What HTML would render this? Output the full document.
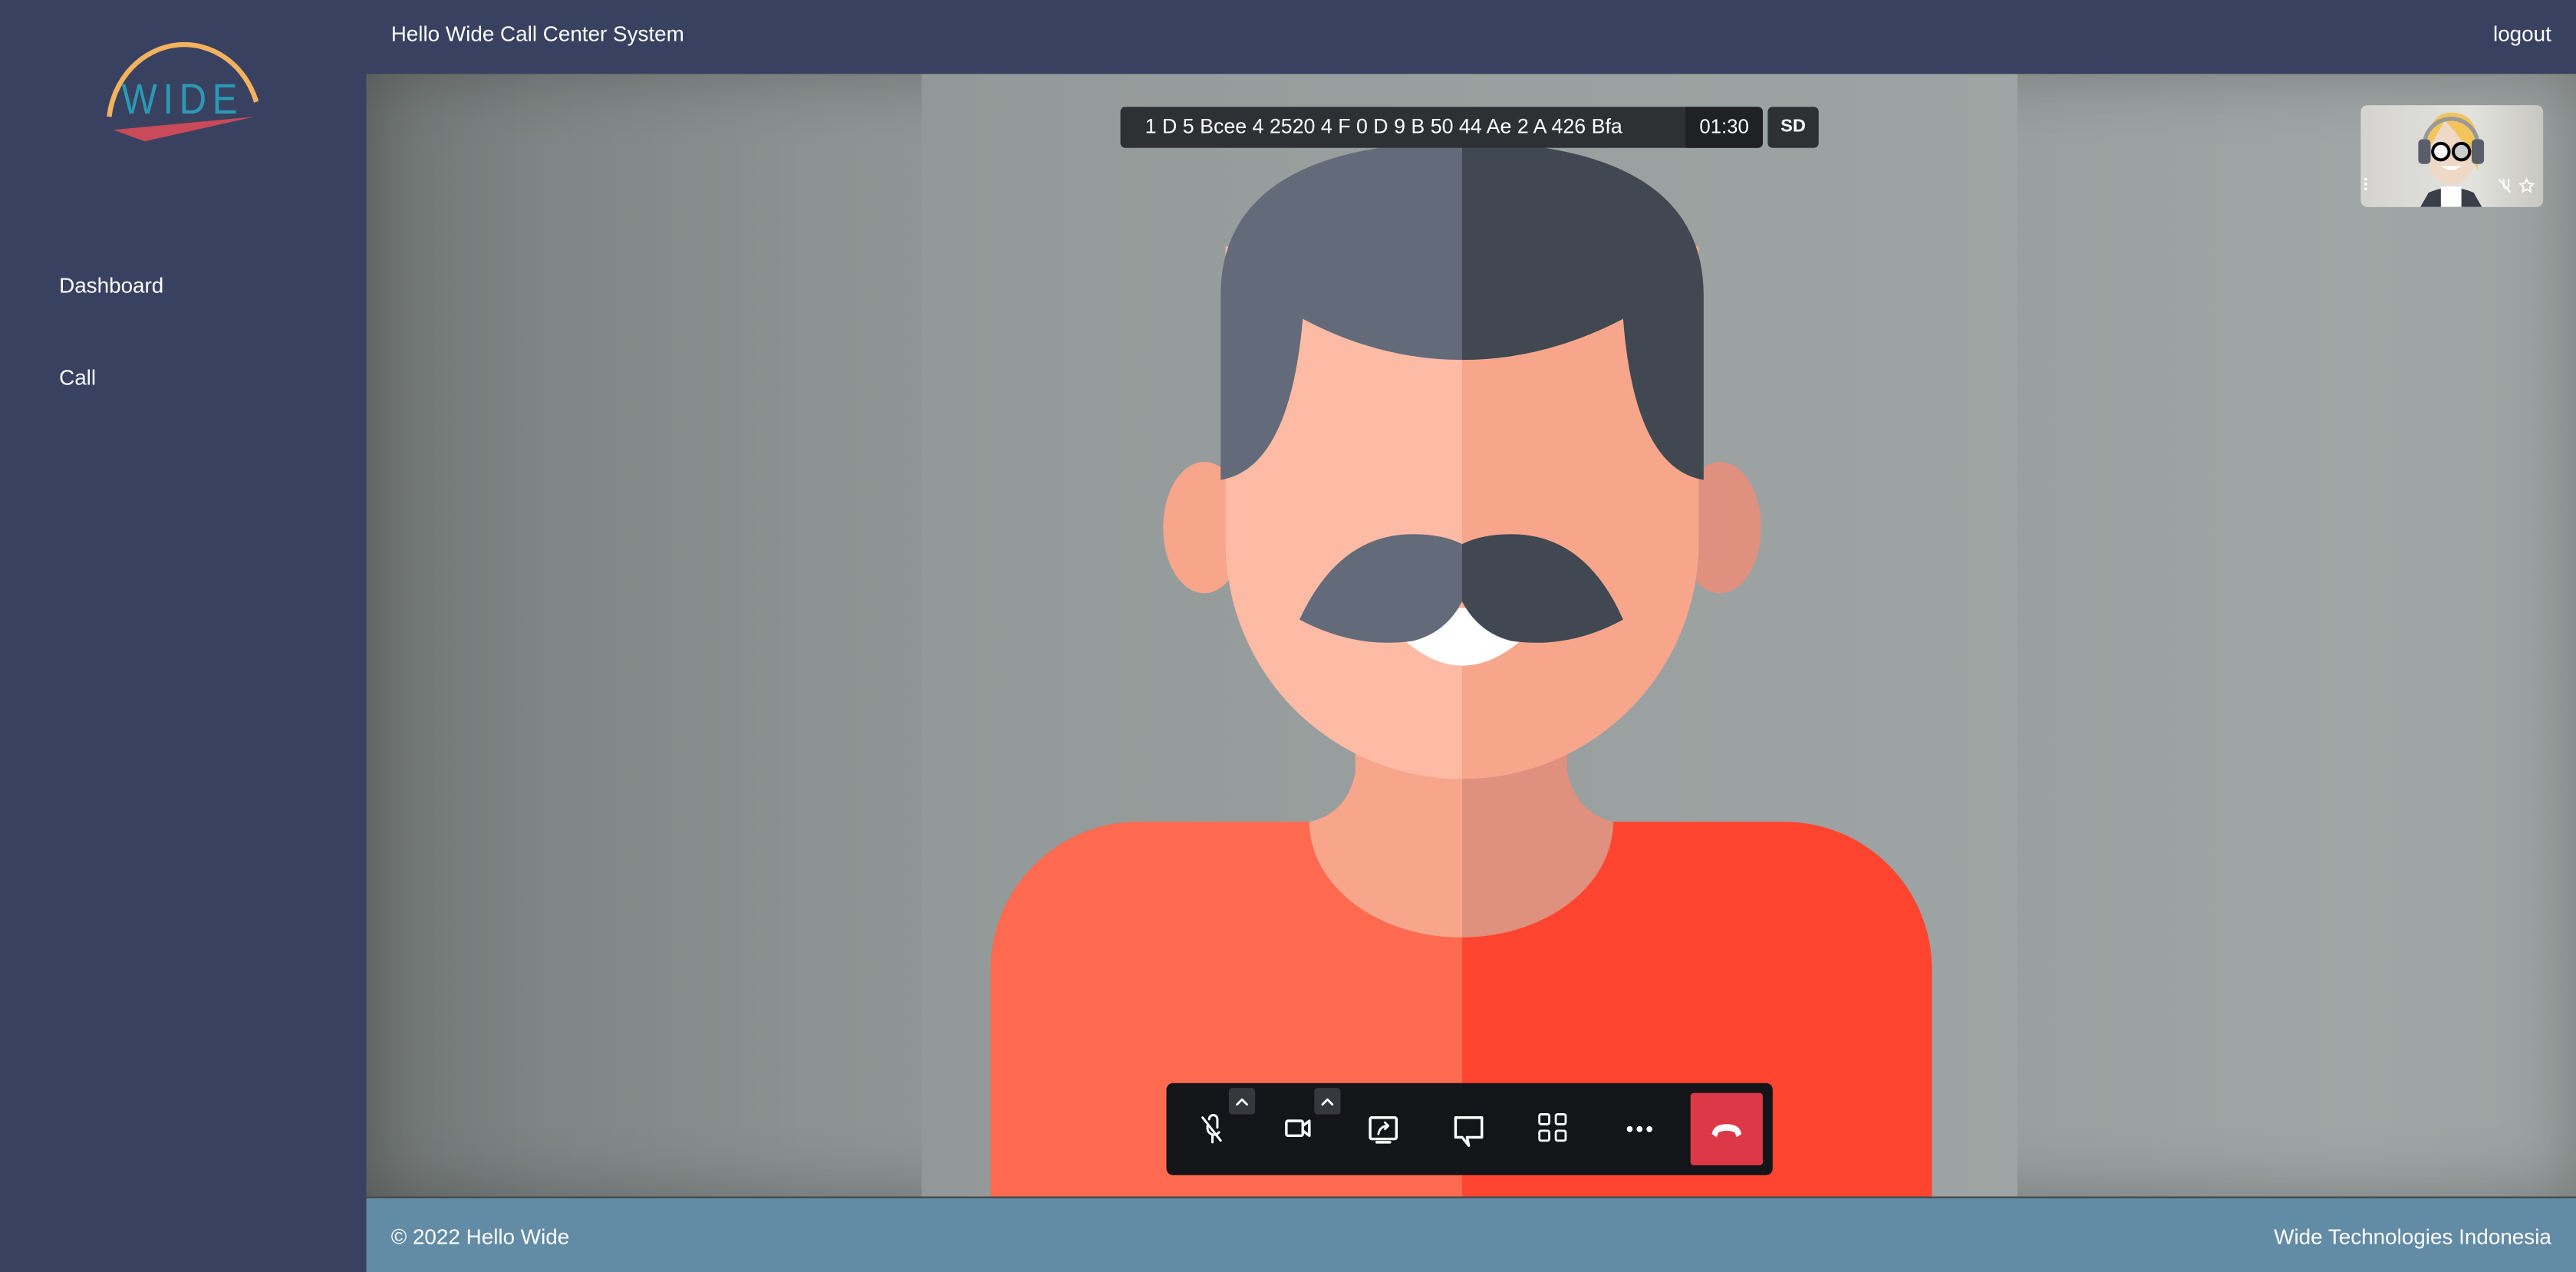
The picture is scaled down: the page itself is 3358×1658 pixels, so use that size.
<!DOCTYPE html>
<html><head><meta charset="utf-8">
<style>
html,body{margin:0;padding:0;width:3358px;height:1656px;overflow:hidden;background:#384260;}
#w{position:absolute;left:0;top:0;width:1568px;height:773px;transform:scale(2.14158,2.14225);transform-origin:0 0;font-family:"Liberation Sans",sans-serif;}
.abs{position:absolute;}
#side{left:0;top:0;width:223px;height:773px;background:#384260;}
#hdr{left:223px;top:0;width:1345px;height:45px;background:#384260;color:#fff;font-size:13px;}
#main{left:223px;top:45px;width:1345px;height:683px;background:linear-gradient(90deg,#6f7473 0%,#7f8584 8%,#8c9291 20%,#8f9594 25%,#9aa09f 75%,#a0a6a5 90%,#9ca2a1 100%);overflow:hidden;}
#foot{left:223px;top:728px;width:1345px;height:45px;background:#628ba5;border-top:1px solid #444;color:#fff;font-size:13px;}
.nav{color:#fff;font-size:13px;left:36px;}
.tb{background:#131519;border-radius:4px;}
</style></head><body>
<div id="w">
<div class="abs" id="side">
 <svg class="abs" style="left:0;top:0" width="223" height="100" viewBox="0 0 223 100">
  <path d="M66.5 71 A46 50 0 0 1 156 62" fill="none" stroke="#f4b25f" stroke-width="3"/>
  <text x="111" y="69" text-anchor="middle" fill="#2a9ab4" font-family="Liberation Sans,sans-serif" font-size="26" letter-spacing="4" textLength="74" lengthAdjust="spacingAndGlyphs">WIDE</text>
  <path d="M69 79 L155 71 L88 86 Z" fill="#c94a58"/>
 </svg>
 <div class="abs nav" style="top:166px">Dashboard</div>
 <div class="abs nav" style="top:222px">Call</div>
</div>
<div class="abs" id="hdr"><span class="abs" style="left:15px;top:13px">Hello Wide Call Center System</span><span class="abs" style="right:15px;top:13px">logout</span></div>
<div class="abs" id="main">
 <div class="abs" style="left:0;top:0;width:1345px;height:683px;box-shadow:inset 0 0 40px rgba(0,0,0,.25)"></div>
 <svg class="abs" style="left:338px;top:0" width="667" height="683" viewBox="561 45 667 683">
  <rect x="561" y="45" width="667" height="683" fill="#9ba1a0"/>
  <rect x="561" y="45" width="667" height="683" fill="url(#g)"/>
  <defs><linearGradient id="g" x1="0" x2="1"><stop offset="0" stop-color="#8a908f" stop-opacity=".5"/><stop offset="1" stop-color="#a4aaa9" stop-opacity=".3"/></linearGradient>
  <clipPath id="L"><rect x="500" y="0" width="390" height="800"/></clipPath>
  <clipPath id="R"><rect x="890" y="0" width="400" height="800"/></clipPath></defs>
  <path d="M603 729 V590 A90 90 0 0 1 693 500 H1086 A90 90 0 0 1 1176 590 V729 Z" fill="#ff6a50" clip-path="url(#L)"/>
  <path d="M603 729 V590 A90 90 0 0 1 693 500 H1086 A90 90 0 0 1 1176 590 V729 Z" fill="#ff4530" clip-path="url(#R)"/>
  <path d="M825 440 H954 V470 Q960 495 982 500 A92 70 0 0 1 797 500 Q820 495 825 470 Z" fill="#f7a68b" clip-path="url(#L)"/>
  <path d="M825 440 H954 V470 Q960 495 982 500 A92 70 0 0 1 797 500 Q820 495 825 470 Z" fill="#e0907f" clip-path="url(#R)"/>
  <ellipse cx="733" cy="321" rx="25" ry="40" fill="#f7a68b"/>
  <ellipse cx="1047" cy="321" rx="25" ry="40" fill="#e0907f"/>
  <path d="M746 150 H1034 V330 A144 144 0 0 1 746 330 Z" fill="#fdbba5" clip-path="url(#L)"/>
  <path d="M746 150 H1034 V330 A144 144 0 0 1 746 330 Z" fill="#f8a68b" clip-path="url(#R)"/>
  <path d="M743 292 V180 Q743 88 890 86 Q1037 88 1037 180 V292 Q995 285 988 194 Q940 219 890 219 Q840 219 793 194 Q785 285 743 292 Z" fill="#636a7a" clip-path="url(#L)"/>
  <path d="M743 292 V180 Q743 88 890 86 Q1037 88 1037 180 V292 Q995 285 988 194 Q940 219 890 219 Q840 219 793 194 Q785 285 743 292 Z" fill="#414852" clip-path="url(#R)"/>
  <path d="M850 385 Q890 355 931 385 Q890 425 850 385 Z" fill="#fff"/>
  <path d="M791 377 Q815 325 860 325 Q878 325 890 331 Q902 325 920 325 Q965 325 988 377 Q955 395 920 390 Q900 385 890 366 Q880 385 860 390 Q825 395 791 377 Z" fill="#636a7a" clip-path="url(#L)"/>
  <path d="M791 377 Q815 325 860 325 Q878 325 890 331 Q902 325 920 325 Q965 325 988 377 Q955 395 920 390 Q900 385 890 366 Q880 385 860 390 Q825 395 791 377 Z" fill="#414852" clip-path="url(#R)"/>
 </svg>
 <div class="abs" style="left:459px;top:20px;width:391px;height:25px;background:#2e3133;border-radius:3px;color:#fff;font-size:12.5px;">
  <span class="abs" style="left:15px;top:5px">1 D 5 Bcee 4 2520 4 F 0 D 9 B 50 44 Ae 2 A 426 Bfa</span>
  <div class="abs" style="left:344px;top:0;width:47px;height:25px;background:#1f2122;border-radius:0 3px 3px 0;text-align:center;line-height:25px;font-size:12px">01:30</div>
 </div>
 <div class="abs" style="left:853px;top:20px;width:31px;height:25px;background:#2e3133;border-radius:3px;color:#fff;font-size:11px;font-weight:bold;text-align:center;line-height:25px">SD</div>
 <div class="abs" style="left:1214px;top:19px;width:111px;height:62px;border-radius:4px;background:linear-gradient(90deg,#d4d3cf,#e2e2de 60%,#c8c7c2);overflow:hidden">
  <svg width="111" height="62" viewBox="0 0 111 62">
   <g transform="translate(55,62) scale(1.25) translate(-55,-62)">
   <path d="M40 62 L44 55 Q55 50 66 55 L70 62 Z" fill="#3a3e48"/>
   <path d="M50 52 h10 v10 h-10z" fill="#fff"/>
   <ellipse cx="55" cy="36" rx="12" ry="15" fill="#efd8c6"/>
   <path d="M43 36 Q43 16 55 16 Q67 16 68 30 L68 44 Q62 30 52 20 Q47 28 43 36 Z" fill="#f2c55c"/>
   <path d="M42 32 A13 13 0 0 1 68 32" fill="none" stroke="#999" stroke-width="2"/>
   <rect x="39" y="29" width="6" height="12" rx="2" fill="#5a5e6a"/><rect x="65" y="29" width="6" height="12" rx="2" fill="#5a5e6a"/>
   <circle cx="50" cy="35" r="4" fill="#fff" stroke="#000" stroke-width="1.5"/><circle cx="60" cy="35" r="4" fill="#ccc" stroke="#000" stroke-width="1.5"/>
   <path d="M50 42 Q55 46 60 42 Z" fill="#fff"/>
   </g>
   <circle cx="3" cy="45" r=".8" fill="#fff"/><circle cx="3" cy="48" r=".8" fill="#fff"/><circle cx="3" cy="51" r=".8" fill="#fff"/>
   <path d="M84 45 L91 53 M87 45 v4 a1.5 1.5 0 0 0 3 0 v-4" stroke="#fff" fill="none" stroke-width="1"/>
   <path d="M101 45 l1.2 2.6 2.8.3-2.1 1.9.6 2.8-2.5-1.4-2.5 1.4.6-2.8-2.1-1.9 2.8-.3z" fill="none" stroke="#fff" stroke-width=".9"/>
  </svg>
 </div>
 <div class="abs tb" style="left:487px;top:614px;width:369px;height:56px;">
  <div class="abs" style="left:38px;top:3px;width:16px;height:16px;background:#35383c;border-radius:2px"></div>
  <div class="abs" style="left:90px;top:3px;width:16px;height:16px;background:#35383c;border-radius:2px"></div>
  <svg class="abs" style="left:0;top:0" width="369" height="56" viewBox="0 0 369 56" fill="none" stroke="#fff" stroke-width="1.6" stroke-linecap="round" stroke-linejoin="round">
   <path d="M43 13 l3 -3 l3 3 M95 13 l3 -3 l3 3" stroke-width="1.3"/>
   <path d="M22 21 L33 35 M25 26 v2 a4 4 0 0 0 7 2 M26 22 a2.5 2.5 0 0 1 5 0 v5 M28 32 v4" stroke-width="1.4"/>
   <rect x="73" y="23" width="10" height="9" rx="1"/><path d="M83 26 l4 -3 v9 l-4 -3"/>
   <rect x="124" y="21" width="16" height="13" rx="1"/><path d="M128 36 h8"/><path d="M129 31 q1 -5 6 -5 M133 24 l2 2 l-2 2" stroke-width="1.3"/>
   <path d="M176 21 h16 v12 h-9 l1 5 l-4 -5 h-4 z"/>
   <rect x="227" y="19" width="6" height="6" rx="1" stroke-width="1.3"/><rect x="237" y="19" width="6" height="6" rx="1" stroke-width="1.3"/>
   <rect x="227" y="29" width="6" height="6" rx="1" stroke-width="1.3"/><rect x="237" y="29" width="6" height="6" rx="1" stroke-width="1.3"/>
   <circle cx="282" cy="28" r="1" fill="#fff"/><circle cx="288" cy="28" r="1" fill="#fff"/><circle cx="294" cy="28" r="1" fill="#fff"/>
  </svg>
  <div class="abs" style="left:319px;top:6px;width:44px;height:44px;background:#dc3848;border-radius:2px">
   <svg width="44" height="44" viewBox="0 0 44 44"><path d="M13 25 Q14 19 22 19 Q30 19 31 25 L28 27 L27 24 Q22 22 17 24 L16 27 Z" fill="#fff"/></svg>
  </div>
 </div>
</div>
<div class="abs" id="foot"><span class="abs" style="left:15px;top:16px">© 2022 Hello Wide</span><span class="abs" style="right:15px;top:16px">Wide Technologies Indonesia</span></div>
</div>
</body></html>
